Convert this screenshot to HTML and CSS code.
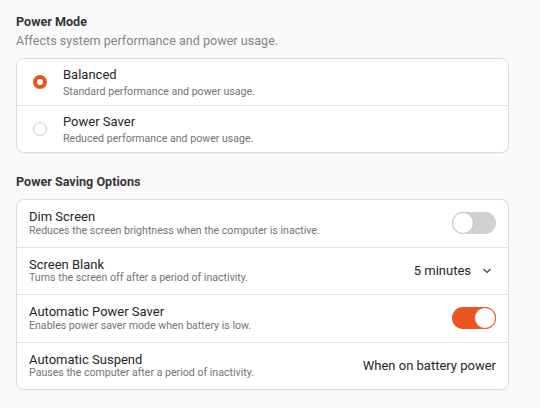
FILE: index.html
```html
<!DOCTYPE html>
<html>
<head>
<meta charset="utf-8">
<link rel="stylesheet" href="styles.css">
</head>
<body>
<div class="page">
  <section class="group">
    <h2 class="group-title">Power Mode</h2>
    <p class="group-desc">Affects system performance and power usage.</p>
    <div class="card">
      <div class="row radio-row">
        <span class="radio checked"></span>
        <div class="labels">
          <div class="title">Balanced</div>
          <div class="subtitle">Standard performance and power usage.</div>
        </div>
      </div>
      <div class="row radio-row">
        <span class="radio"></span>
        <div class="labels">
          <div class="title">Power Saver</div>
          <div class="subtitle">Reduced performance and power usage.</div>
        </div>
      </div>
    </div>
  </section>

  <section class="group group-2">
    <h2 class="group-title">Power Saving Options</h2>
    <div class="card">
      <div class="row">
        <div class="labels">
          <div class="title">Dim Screen</div>
          <div class="subtitle">Reduces the screen brightness when the computer is inactive.</div>
        </div>
        <span class="switch"><span class="knob"></span></span>
      </div>
      <div class="row">
        <div class="labels">
          <div class="title">Screen Blank</div>
          <div class="subtitle">Turns the screen off after a period of inactivity.</div>
        </div>
        <div class="combo">
          <span class="value">5 minutes</span>
          <svg class="chevron" width="10" height="6" viewBox="0 0 10 6"><path d="M1.5 1 L5 4.5 L8.5 1" fill="none" stroke="#3d3d3d" stroke-width="1.2"/></svg>
        </div>
      </div>
      <div class="row">
        <div class="labels">
          <div class="title">Automatic Power Saver</div>
          <div class="subtitle">Enables power saver mode when battery is low.</div>
        </div>
        <span class="switch on"><span class="knob"></span></span>
      </div>
      <div class="row">
        <div class="labels">
          <div class="title">Automatic Suspend</div>
          <div class="subtitle">Pauses the computer after a period of inactivity.</div>
        </div>
        <span class="value">When on battery power</span>
      </div>
    </div>
  </section>
</div>
</body>
</html>
```

FILE: styles.css
```css
html, body {
  margin: 0;
  padding: 0;
  background: #fafafa;
}
body {
  font-family: Roboto, "Noto Sans", sans-serif;
  color: #3d3d3d;
  width: 540px;
  height: 408px;
  overflow: hidden;
}
.page {
  padding: 12px 0 0 16px;
  width: 493px;
}
.group-title {
  margin: 0;
  font-size: 12.6px;
  font-weight: 700;
  line-height: 20px;
  color: #363636;
}
.group-desc {
  margin: 0;
  font-size: 12.6px;
  line-height: 18px;
  color: #858585;
}
.group .card {
  margin-top: 8px;
}
.group-2 {
  margin-top: 19px;
}
.group-2 .card {
  margin-top: 7px;
}
.card {
  background: #ffffff;
  border: 1px solid #dcdcdc;
  border-radius: 8px;
  box-shadow: 0 1px 1px rgba(0,0,0,0.04);
}
.row {
  display: flex;
  align-items: center;
  justify-content: space-between;
  height: 46px;
  padding: 0 12px;
  border-top: 1px solid #e2e2e2;
}
.row:first-child {
  border-top: none;
}
.group-2 .row {
  height: 46.5px;
}
.radio-row {
  justify-content: flex-start;
}
.radio {
  width: 14px;
  height: 14px;
  border-radius: 50%;
  border: 1px solid #cacaca;
  box-sizing: border-box;
  margin: 0 16px 0 4px;
  flex: none;
  background: #fff;
}
.radio.checked {
  border: 4.5px solid #e95420;
}
.labels {
  display: flex;
  flex-direction: column;
}
.title {
  font-size: 13px;
  line-height: 15.5px;
  color: #262626;
}
.subtitle {
  font-size: 10.6px;
  line-height: 12.5px;
  color: #737373;
}
.radio-row .title {
  line-height: 16px;
}
.radio-row .subtitle {
  line-height: 13px;
  margin-top: 2px;
}
.switch {
  position: relative;
  width: 44px;
  height: 22px;
  border-radius: 11px;
  background: #d0d0d0;
  flex: none;
}
.switch .knob {
  position: absolute;
  top: 0;
  left: 0;
  width: 22px;
  height: 22px;
  border-radius: 50%;
  background: #ffffff;
  border: 1px solid #c4c4c4;
  box-sizing: border-box;
}
.switch.on {
  background: #e95420;
}
.switch.on .knob {
  left: 22px;
  border-color: #e95420;
}
.combo {
  display: flex;
  align-items: center;
  gap: 11px;
  padding-right: 4px;
}
.value {
  font-size: 13px;
  line-height: 16px;
  color: #262626;
}
.chevron {
  display: block;
}
```
